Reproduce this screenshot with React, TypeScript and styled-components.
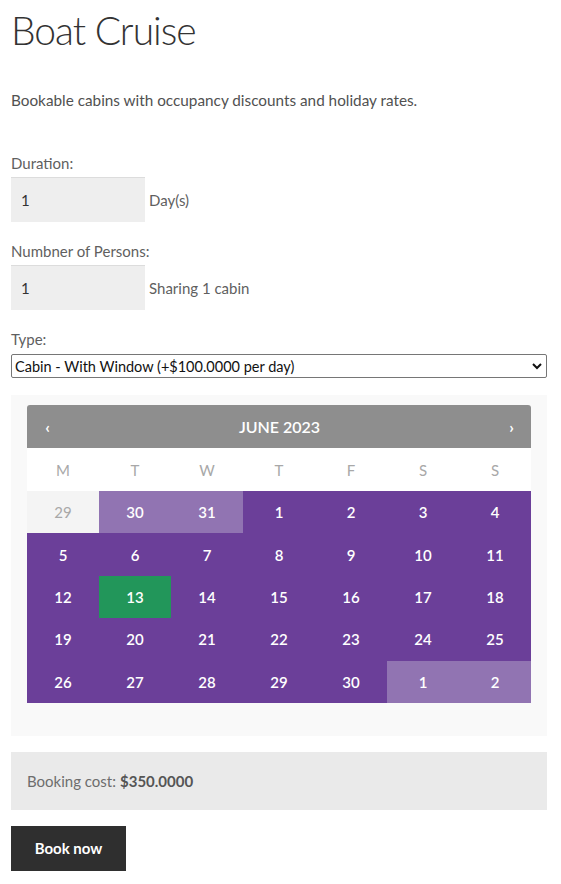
import React from "react";
import styled, { createGlobalStyle } from "styled-components";

const Global = createGlobalStyle`
  html, body { margin: 0; padding: 0; background: #fff; }
  body { font-family: "Source Sans Pro", Lato, "Noto Sans", sans-serif; color: #6d6d6d; }
  * { box-sizing: border-box; }
`;

const Page = styled.div`
  width: 561px;
  padding: 0 14px 13px 11px;
`;

const Title = styled.h1`
  margin: 7px 0 0;
  font-size: 39px;
  font-weight: 300;
  line-height: 46px;
  color: #333;
  letter-spacing: -1px;
`;

const Description = styled.p`
  margin: 34px 0 0;
  font-size: 15.3px;
  line-height: 26px;
  color: #515151;
`;

const Field = styled.div<{ $top: number }>`
  margin-top: ${(p) => p.$top}px;
  display: flex;
  flex-direction: column;
`;

const Label = styled.label`
  font-size: 15px;
  line-height: 22px;
  color: #5f5f5f;
  margin-bottom: 3px;
`;

const InputRow = styled.div`
  display: flex;
  align-items: center;
  gap: 4px;
`;

const NumberBox = styled.div`
  width: 134px;
  height: 45px;
  background: #eeeeee;
  border-top: 1px solid #dcdcdc;
  padding: 0 10px;
  display: flex;
  align-items: center;
  font-size: 15px;
  color: #333;
`;

const Suffix = styled.span`
  font-size: 15px;
  color: #5f5f5f;
`;

const SelectBox = styled.div`
  position: relative;
  height: 24px;
  margin-top: 1px;
  border: 1px solid #767676;
  border-radius: 2px;
  display: flex;
  align-items: center;
  padding: 0 3px;
  font-size: 14.5px;
  color: #111;
  background: #fff;
`;

const Chevron = styled.svg`
  position: absolute;
  right: 4px;
  top: 7px;
`;

const CalendarWrap = styled.div`
  margin-top: 17px;
  background: #f9f9f9;
  padding: 10px 16px 33px;
`;

const CalHeader = styled.div`
  height: 43px;
  background: #8e8e8e;
  border-radius: 3px 3px 0 0;
  display: flex;
  align-items: center;
  justify-content: space-between;
  padding: 0 17px 0 18px;
  color: #fff;
`;

const Nav = styled.span`
  font-size: 16px;
  font-weight: 700;
  width: 5px;
  display: flex;
  justify-content: center;
`;

const MonthTitle = styled.span`
  font-size: 16px;
  font-weight: 600;
`;

const Grid = styled.div`
  display: grid;
  grid-template-columns: repeat(7, 1fr);
`;

const Weekday = styled.div`
  height: 43px;
  background: #fff;
  display: flex;
  align-items: center;
  justify-content: center;
  font-size: 15px;
  color: #a8a8a8;
`;

type Kind = "past" | "avail" | "other" | "selected";
const bg: Record<Kind, string> = {
  past: "#f4f4f4",
  avail: "#6b3f99",
  other: "#9174b2",
  selected: "#22965a",
};

const Day = styled.div<{ $kind: Kind }>`
  height: 42.4px;
  background: ${(p) => bg[p.$kind]};
  color: ${(p) => (p.$kind === "past" ? "#a8a8a8" : "#fff")};
  display: flex;
  align-items: center;
  justify-content: center;
  font-size: 15px;
  font-weight: ${(p) => (p.$kind === "past" ? 400 : 600)};
`;

const CostBox = styled.div`
  margin-top: 16px;
  height: 58px;
  background: #eaeaea;
  display: flex;
  align-items: center;
  padding: 0 16px;
  font-size: 15px;
  color: #6d6d6d;
  b { color: #555; font-weight: 700; margin-left: 4px; }
`;

const BookButton = styled.button`
  margin-top: 16px;
  height: 45px;
  width: 115px;
  background: #2f2f2f;
  color: #fff;
  border: 0;
  font-family: inherit;
  font-size: 15px;
  font-weight: 700;
  cursor: pointer;
`;

const weekdays = ["M", "T", "W", "T", "F", "S", "S"];

const days: { n: number; k: Kind }[] = [
  { n: 29, k: "past" },
  { n: 30, k: "other" },
  { n: 31, k: "other" },
  ...Array.from({ length: 30 }, (_, i) => ({
    n: i + 1,
    k: (i + 1 === 13 ? "selected" : "avail") as Kind,
  })),
  { n: 1, k: "other" },
  { n: 2, k: "other" },
];

export default function App() {
  return (
    <Page>
      <Global />
      <Title>Boat Cruise</Title>
      <Description>Bookable cabins with occupancy discounts and holiday rates.</Description>
      <Field $top={39}>
        <Label>Duration:</Label>
        <InputRow>
          <NumberBox>1</NumberBox>
          <Suffix>Day(s)</Suffix>
        </InputRow>
      </Field>
      <Field $top={18}>
        <Label>Numbner of Persons:</Label>
        <InputRow>
          <NumberBox>1</NumberBox>
          <Suffix>Sharing 1 cabin</Suffix>
        </InputRow>
      </Field>
      <Field $top={18}>
        <Label>Type:</Label>
        <SelectBox>
          Cabin - With Window (+$100.0000 per day)
          <Chevron width="10" height="8" viewBox="0 0 10 8">
            <path d="M1 2 L5 6 L9 2" fill="none" stroke="#111" strokeWidth="2" />
          </Chevron>
        </SelectBox>
      </Field>
      <CalendarWrap>
        <CalHeader>
          <Nav>‹</Nav>
          <MonthTitle>JUNE 2023</MonthTitle>
          <Nav>›</Nav>
        </CalHeader>
        <Grid>
          {weekdays.map((w, i) => (
            <Weekday key={i}>{w}</Weekday>
          ))}
          {days.map((d, i) => (
            <Day key={i} $kind={d.k}>
              {d.n}
            </Day>
          ))}
        </Grid>
      </CalendarWrap>
      <CostBox>
        Booking cost: <b>$350.0000</b>
      </CostBox>
      <BookButton>Book now</BookButton>
    </Page>
  );
}
